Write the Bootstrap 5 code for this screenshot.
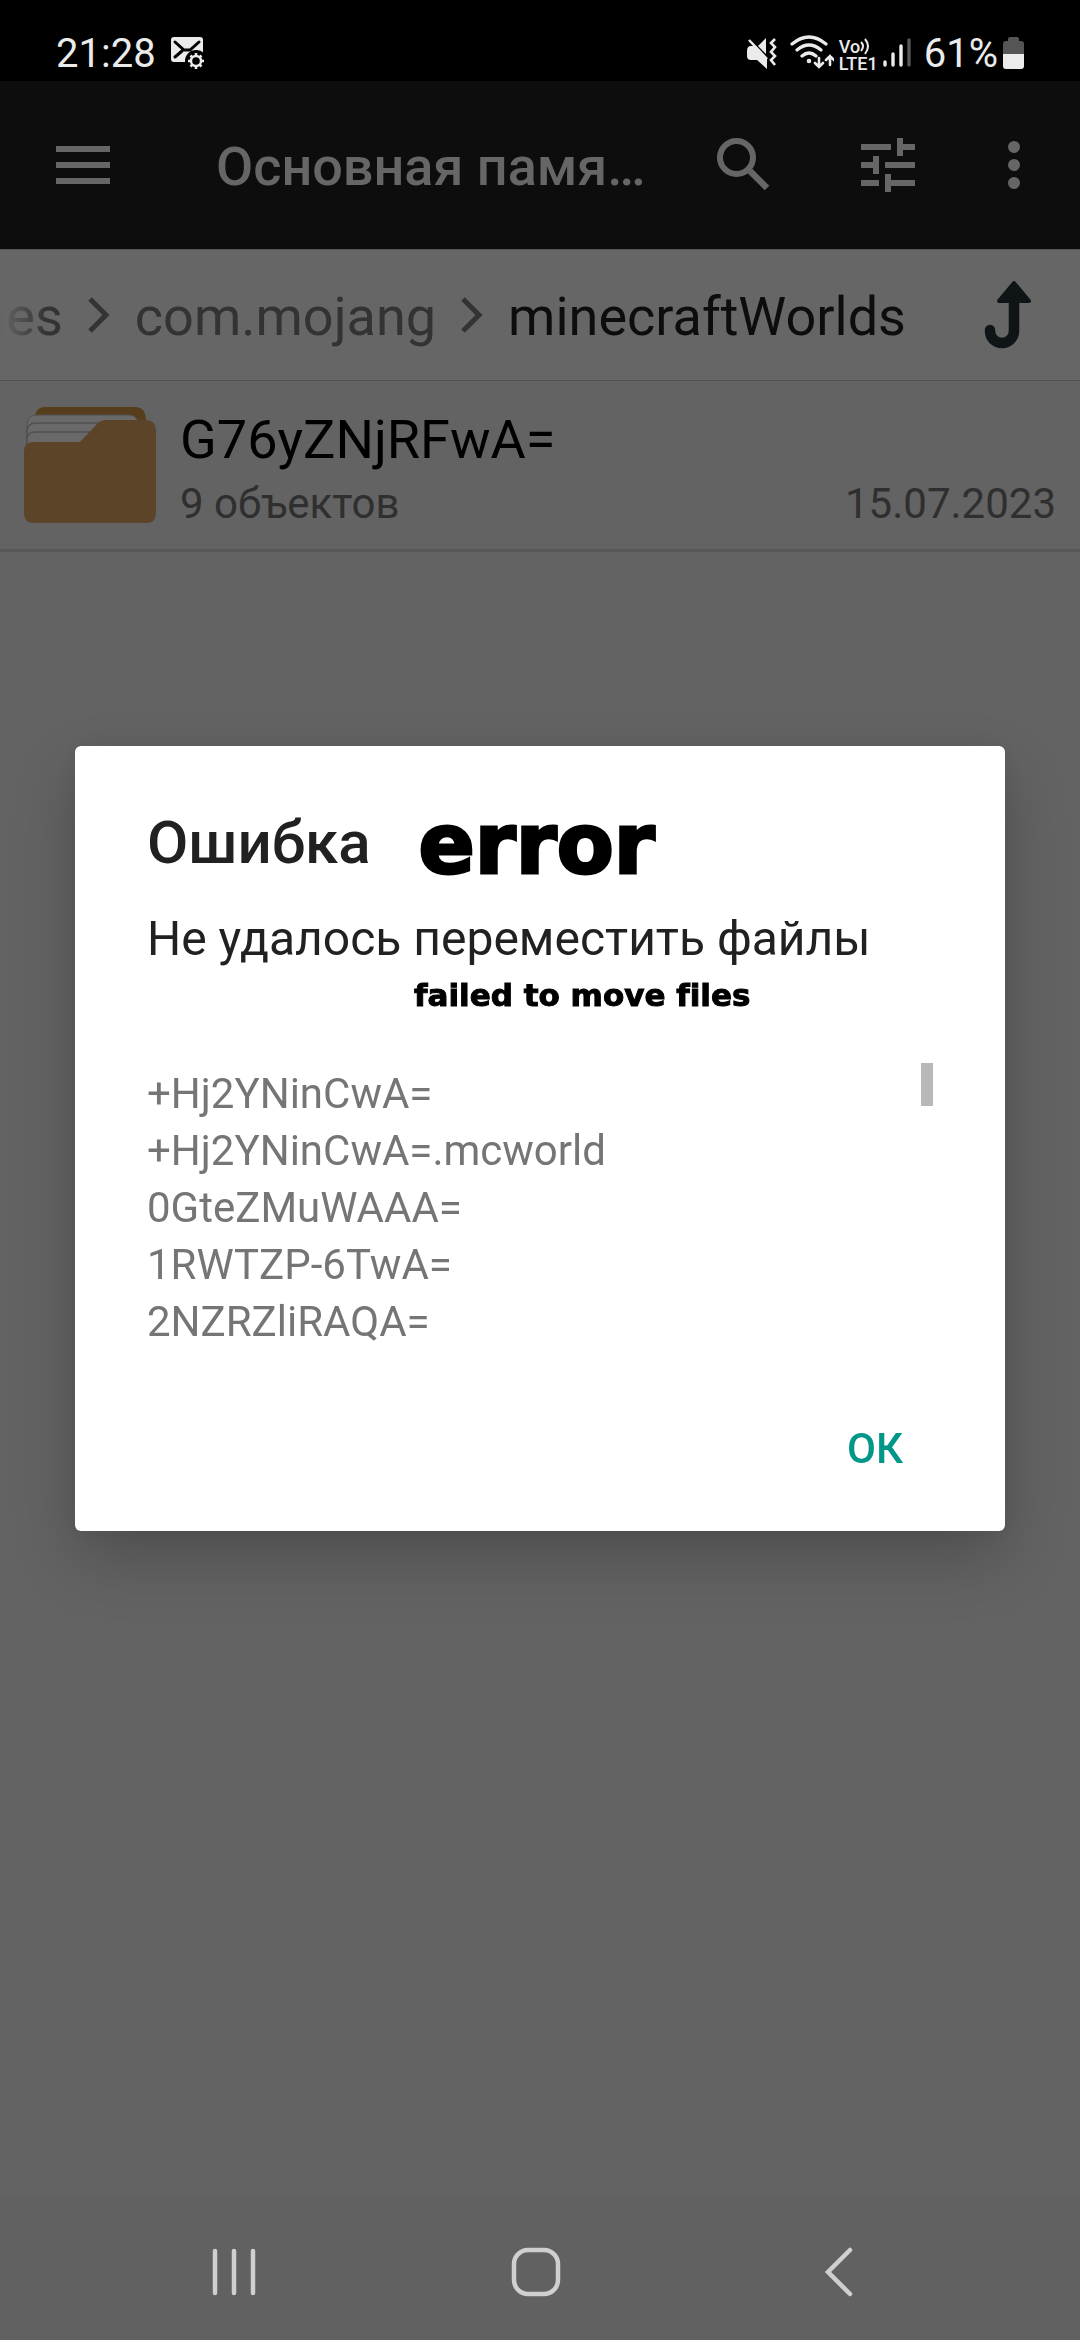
<!DOCTYPE html>
<html lang="ru">
<head>
<meta charset="utf-8">
<meta name="viewport" content="width=device-width, initial-scale=1">
<title>Основная память</title>
<link href="https://cdn.jsdelivr.net/npm/bootstrap@5.3.0/dist/css/bootstrap.min.css" rel="stylesheet">
<style>
  body { background: #636363; font-family: Roboto, "Noto Sans", sans-serif; color: #000; }
  svg { display: block; flex: none; }
  button { padding: 0; border: 0; background: none; }
  .status-bar { background: #000; color: #ebebeb; height: 81px; padding: 26px 55px 0 56px; font-size: 40px; line-height: 56px; }
  .status-bar .icons { gap: 5px; }
  .status-bar .clock { gap: 14px; }
  .volte { font-size: 18px; line-height: 17px; font-weight: 500; }
  .app-bar { background: #0d0d0d; color: #666; height: 168px; padding: 0 48px 0 56px; }
  .app-bar .tools { gap: 81px; }
  .app-title { font-size: 54px; line-height: 64px; font-weight: 500; margin-left: 106px; padding-top: 4px; }
  .path-bar { background: #666; border-top: 1px solid #555; border-bottom: 1px solid #525252; height: 132px; }
  .crumbs { width: 906px; gap: 24px; font-size: 54px; line-height: 64px; -webkit-mask-image: linear-gradient(90deg, transparent, #000 48px); mask-image: linear-gradient(90deg, transparent, #000 48px); }
  .crumbs a { color: #333; text-decoration: none; padding-top: 4px; }
  .crumbs a.here { color: #0d0d0d; }
  .file-row { height: 171px; padding: 26px 24px 0; gap: 24px; border-bottom: 3px solid #585858; }
  .file-name { font-size: 54px; line-height: 64px; margin-top: 1px; }
  .file-meta { font-size: 42px; line-height: 50px; color: #2f2f2f; margin-top: 7px; }
  .alert-layer { padding: 81px 0 145px; }
  .alert-layer .modal-dialog { max-width: none; margin: 0 75px; min-height: 100%; }
  .alert-box { border: 0; border-radius: 6px; background: #fff; padding: 61px 72px 34px; box-shadow: 0 28px 64px rgba(0,0,0,.2), 0 0 24px rgba(0,0,0,.08); }
  .alert-title { font-size: 60px; line-height: 72px; font-weight: 500; color: #212121; margin: 0; }
  .note { font-family: "DejaVu Sans", sans-serif; font-weight: 700; font-variant-ligatures: none; color: #000; -webkit-text-stroke: 1px #000; }
  .note-title { font-size: 83px; line-height: 68px; margin-left: 48px; padding-top: 4px; -webkit-text-stroke-width: 3px; }
  .alert-text { font-size: 48px; line-height: 57px; color: #212121; margin: 31px 0 0; }
  .note-text { font-size: 31px; line-height: 56px; padding-left: 267px; margin: 0; }
  .fail-area { margin: 40px 0 51px; }
  .fail-list { font-size: 42px; line-height: 57px; color: #757575; padding-top: 2px; }
  .scroll-thumb { width: 12px; height: 43px; background: #b8b8b8; }
  .ok-btn { color: #009688; font-size: 42px; line-height: 60px; font-weight: 500; padding: 18px 30px; }
  .nav-keys { background: #616161; height: 144px; padding: 8px 90px 0 83px; }
  .nav-keys button { flex: 1 1 0; }
</style>
</head>
<body>
<div class="min-vh-100 d-flex flex-column">
  <div class="status-bar d-flex justify-content-between">
    <div class="d-flex align-items-start clock">
      <span>21:28</span>
      <svg class="mt-2" width="36" height="36" viewBox="0 0 36 36"><rect x="1" y="3" width="32" height="25" rx="3" fill="#ebebeb"/><path d="M5 8l9 8h6l9-8M5 23l7-6" stroke="#000" stroke-width="3" fill="none" stroke-linecap="round"/><circle cx="26" cy="27" r="11" fill="#000"/><circle cx="26" cy="27" r="5" fill="none" stroke="#ebebeb" stroke-width="2.400"/><path d="M26 19v3M26 32v3M18 27h3M31 27h3M20.500 21.500l2 2M29.500 30.500l2 2M20.500 32.500l2-2M29.500 23.500l2-2" stroke="#ebebeb" stroke-width="2.600"/></svg>
    </div>
    <div class="d-flex align-items-start icons">
      <svg class="mt-2 me-2" width="32" height="36" viewBox="0 0 32 36"><path d="M2 17q0-5 4-5h5l11 12v11l-10-9H6q-4 0-4-4zM13 12l8-8v16z" fill="#ebebeb"/><path d="M4 6l18 19" stroke="#ebebeb" stroke-width="2.500"/><path d="M30 5l-4 4 4 4-4 5 4 4-4 4 4 5" stroke="#ebebeb" stroke-width="2.600" fill="none"/></svg>
      <svg class="mt-2" width="44" height="36" viewBox="0 0 44 36" fill="none" stroke="#ebebeb" stroke-width="3.200" stroke-linecap="round"><path d="M2 10q17-14 34 0M7 16q12-10 24 0M12 22q7-6 14 0"/><circle cx="19" cy="27" r="1" stroke-width="2.600"/><path d="M29 24v9m-4-4l4 4 4-4M40 31v-9m-4 4l4-4 4 4" stroke-width="2.600"/></svg>
      <div class="volte d-flex flex-column pt-2 mt-1">
        <span class="d-flex">Vo<svg width="11" height="17" viewBox="0 0 11 17" fill="none" stroke="#ebebeb" stroke-width="2"><path d="M1 4q4 4 0 9M5 1q6 7 0 15"/></svg></span>
        <span>LTE1</span>
      </div>
      <svg class="mt-2 me-2" width="28" height="36" viewBox="0 0 28 36" stroke="#ebebeb" stroke-width="3.400" stroke-linecap="round"><path d="M2 28v3M10 20v11M18 12v19"/><path d="M26 6v25" stroke="#585858"/></svg>
      <span>61%</span>
      <svg class="mt-2" width="22" height="36" viewBox="0 0 22 36"><path d="M5 7V5q0-2 2-2h7q2 0 2 2v2h2q3 0 3 3v11H0V10q0-3 3-3z" fill="#555"/><path d="M0 20h21v12q0 3-3 3H3q-3 0-3-3z" fill="#ebebeb"/></svg>
    </div>
  </div>

  <header class="app-bar d-flex align-items-center">
    <button type="button" aria-label="Меню"><svg width="54" height="38" viewBox="0 0 54 38" fill="#666"><path d="M0 0h54v6H0zM0 16h54v6H0zM0 32h54v6H0z"/></svg></button>
    <h1 class="app-title mb-0 flex-grow-1">Основная памя…</h1>
    <div class="d-flex align-items-center tools">
      <button type="button" aria-label="Поиск"><svg width="63" height="54" viewBox="0 0 63 54" fill="none" stroke="#666" stroke-width="6"><circle cx="19.500" cy="19.500" r="16.500"/><path d="M33 33l17 17" stroke-width="6.500"/></svg></button>
      <button type="button" aria-label="Настройки"><svg width="54" height="54" viewBox="0 0 54 54" fill="#666"><path d="M0 6h30v6H0zM36 0h6v6h12v6H42v6h-6zM0 24h12v-6h6v18h-6v-6H0zM24 24h30v6H24zM0 42h18v6H0zM24 36h6v6h24v6H30v6h-6z"/></svg></button>
      <button type="button" aria-label="Ещё"><svg width="36" height="48" viewBox="0 0 36 48" fill="#666"><circle cx="18" cy="6" r="6"/><circle cx="18" cy="24" r="6"/><circle cx="18" cy="42" r="6"/></svg></button>
    </div>
  </header>

  <nav class="path-bar d-flex align-items-center justify-content-between" aria-label="Путь">
    <div class="crumbs d-flex align-items-center justify-content-end overflow-hidden">
      <a href="#">games</a>
      <svg width="24" height="38" viewBox="0 0 24 38" fill="none" stroke="#333" stroke-width="5"><path d="M3 3l16 16L3 35"/></svg>
      <a href="#">com.mojang</a>
      <svg width="24" height="38" viewBox="0 0 24 38" fill="none" stroke="#333" stroke-width="5"><path d="M3 3l16 16L3 35"/></svg>
      <a href="#" class="here">minecraftWorlds</a>
    </div>
    <button type="button" class="me-5" aria-label="Вверх"><svg width="48" height="70" viewBox="0 0 48 70"><path d="M30 20v31a11.500 11.500 0 0 1-24 0v-1" fill="none" stroke="#0f1417" stroke-width="10.500" stroke-linecap="round"/><path d="M30 3L45 21H15z" fill="#0f1417" stroke="#0f1417" stroke-width="4" stroke-linejoin="round"/></svg></button>
  </nav>

  <main class="flex-grow-1">
    <div class="file-row d-flex">
      <svg width="132" height="118" viewBox="0 0 132 118"><path d="M11 12q0-12 10-12h90q11 0 11 14v16H11z" fill="#563d1c"/><path d="M3 40V18q0-10 10-10h92q9 0 9 10v20z" fill="#696969" stroke="#505050"/><path d="M3 40V25q0-9 9-9h76M3 42V33q0-8 8-8h64" fill="none" stroke="#505050" stroke-width="1.500"/><path d="M0 44q0-9 10-9h46L73 17q4-4 9-4h39q11 0 11 11v82q0 10-10 10H10q-10 0-10-10z" fill="#5b4428"/></svg>
      <div class="flex-grow-1">
        <div class="file-name">G76yZNjRFwA=</div>
        <div class="file-meta d-flex justify-content-between"><span>9 объектов</span><span>15.07.2023</span></div>
      </div>
    </div>
  </main>

  <footer class="nav-keys d-flex align-items-center">
    <button type="button" aria-label="Недавние"><svg class="mx-auto" width="50" height="54" viewBox="0 0 50 54" stroke="#d0d0d0" stroke-width="4.500" stroke-linecap="round"><path d="M6 6v42M25 6v42M44 6v42"/></svg></button>
    <button type="button" aria-label="Домой"><svg class="mx-auto" width="54" height="54" viewBox="0 0 54 54"><rect x="5" y="5" width="44" height="44" rx="14" fill="none" stroke="#d0d0d0" stroke-width="4.500"/></svg></button>
    <button type="button" aria-label="Назад"><svg class="mx-auto" width="36" height="54" viewBox="0 0 36 54" fill="none" stroke="#d0d0d0" stroke-width="4.500" stroke-linecap="round"><path d="M29 5L7 27l22 22"/></svg></button>
  </footer>
</div>

<div class="modal d-block alert-layer" role="dialog" aria-labelledby="alertTitle">
  <div class="modal-dialog modal-dialog-centered">
    <div class="modal-content alert-box">
      <div class="d-flex">
        <h2 class="alert-title" id="alertTitle">Ошибка</h2>
        <span class="note note-title">error</span>
      </div>
      <p class="alert-text">Не удалось переместить файлы</p>
      <p class="note note-text">failed to move files</p>
      <div class="fail-area d-flex justify-content-between align-items-start">
        <ul class="fail-list list-unstyled mb-0">
          <li>+Hj2YNinCwA=</li>
          <li>+Hj2YNinCwA=.mcworld</li>
          <li>0GteZMuWAAA=</li>
          <li>1RWTZP-6TwA=</li>
          <li>2NZRZliRAQA=</li>
        </ul>
        <div class="scroll-thumb"></div>
      </div>
      <div class="d-flex justify-content-end">
        <button type="button" class="ok-btn">ОК</button>
      </div>
    </div>
  </div>
</div>
<script src="https://cdn.jsdelivr.net/npm/bootstrap@5.3.0/dist/js/bootstrap.bundle.min.js"></script>
</body>
</html>
